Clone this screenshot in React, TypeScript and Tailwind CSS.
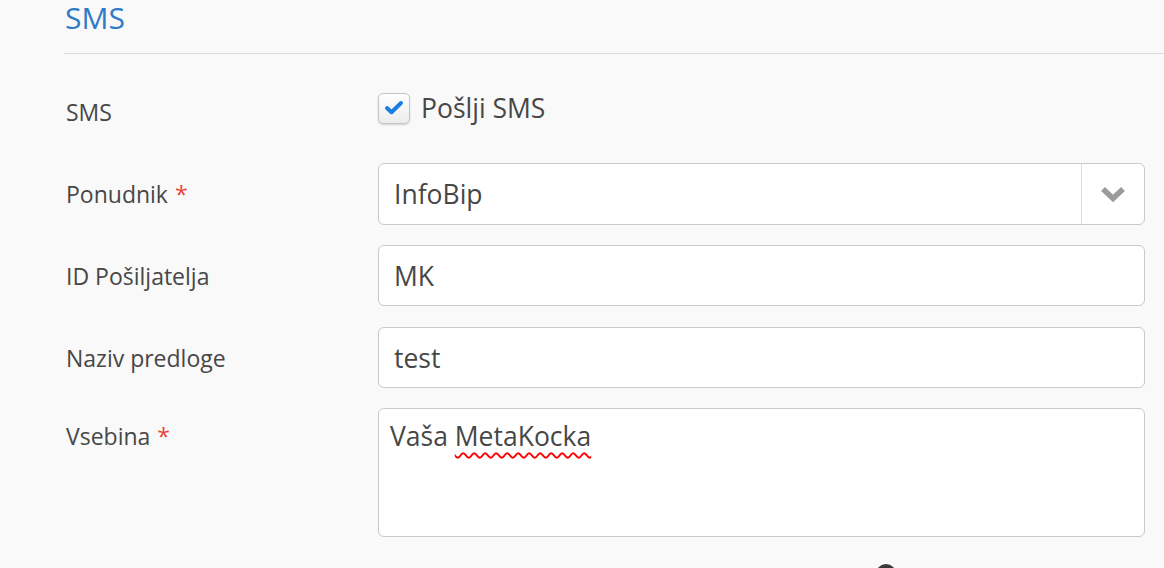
import React, { useState } from 'react'

const font = { fontFamily: '"Open Sans", "Liberation Sans", sans-serif' }

function Label({ text, required }: { text: string; required?: boolean }) {
  return (
    <div className="w-[314px] shrink-0 pl-[2px] text-[23px] leading-[normal] text-[#474747]">
      {text}
      {required && <span className="ml-[7px] text-[#e8453c]">*</span>}
    </div>
  )
}

export default function App() {
  const [sendSms, setSendSms] = useState(true)

  return (
    <div className="h-[568px] w-[1164px] overflow-hidden bg-[#f9f9f9]" style={font}>
      <div className="pl-[64px]">
        {/* section header */}
        <h2 className="pl-[1px] text-[30px] leading-[36px] text-[#2f7bc6]">SMS</h2>
        <div className="mt-[17px] h-px bg-[#dcdcdc]" />

        <div className="pr-[19px]">
          {/* send sms checkbox */}
          <div className="mt-[38px] flex items-start">
            <div className="mt-[4px]">
              <Label text="SMS" />
            </div>
            <label className="flex h-[32px] cursor-pointer items-center gap-[11px]">
              <button
                type="button"
                onClick={() => setSendSms(!sendSms)}
                className="flex h-[31px] w-[32px] items-center justify-center rounded-[5px] border border-[#c4c4c4] bg-gradient-to-b from-white to-[#ececec] shadow-[0_1px_2px_rgba(0,0,0,0.15)]"
              >
                {sendSms && (
                  <svg width="22" height="18" viewBox="0 0 22 18">
                    <path
                      d="M4 9 L8.5 13.2 L18 4"
                      fill="none"
                      stroke="#1a7fe0"
                      strokeWidth="4"
                      strokeLinecap="round"
                      strokeLinejoin="round"
                    />
                  </svg>
                )}
              </button>
              <span className="text-[26.5px] leading-[normal] text-[#474747]">Pošlji SMS</span>
            </label>
          </div>

          {/* provider */}
          <div className="mt-[35px] flex items-center">
            <Label text="Ponudnik" required />
            <div className="flex h-[62px] flex-1 items-center rounded-[6px] border border-[#c9c9c9] bg-white">
              <span className="flex-1 pl-[15px] text-[26.5px] leading-[normal] text-[#474747]">InfoBip</span>
              <div className="flex h-full w-[63px] items-center justify-center border-l border-[#dedede]">
                <svg width="28" height="18" viewBox="0 0 28 18">
                  <path
                    d="M4 4 L14 13.5 L24 4"
                    fill="none"
                    stroke="#9b9b9b"
                    strokeWidth="5.5"
                    strokeLinejoin="miter"
                  />
                </svg>
              </div>
            </div>
          </div>

          {/* sender id */}
          <div className="mt-[20px] flex items-center">
            <Label text="ID Pošiljatelja" />
            <div className="flex h-[61px] flex-1 items-center rounded-[6px] border border-[#c9c9c9] bg-white pl-[15px] text-[26.5px] leading-[normal] text-[#474747]">
              MK
            </div>
          </div>

          {/* template name */}
          <div className="mt-[21px] flex items-center">
            <Label text="Naziv predloge" />
            <div className="flex h-[61px] flex-1 items-center rounded-[6px] border border-[#c9c9c9] bg-white pl-[15px] text-[26.5px] leading-[normal] text-[#474747]">
              test
            </div>
          </div>

          {/* content */}
          <div className="mt-[20px] flex items-start">
            <div className="pt-[12px]">
              <Label text="Vsebina" required />
            </div>
            <div className="h-[129px] flex-1 rounded-[6px] border border-[#c9c9c9] bg-white pl-[11px] pt-[9px] text-[26.5px] leading-[normal] text-[#474747]">
              Vaša{' '}
              <span className="underline decoration-[#ff0000] decoration-wavy decoration-[1.5px] underline-offset-[6px]">
                MetaKocka
              </span>
            </div>
          </div>

          {/* next row, cut off */}
          <div className="mt-[27px] flex">
            <div className="ml-[812px] h-[20px] w-[20px] rounded-full bg-[#3a3a3a]" />
          </div>
        </div>
      </div>
    </div>
  )
}
